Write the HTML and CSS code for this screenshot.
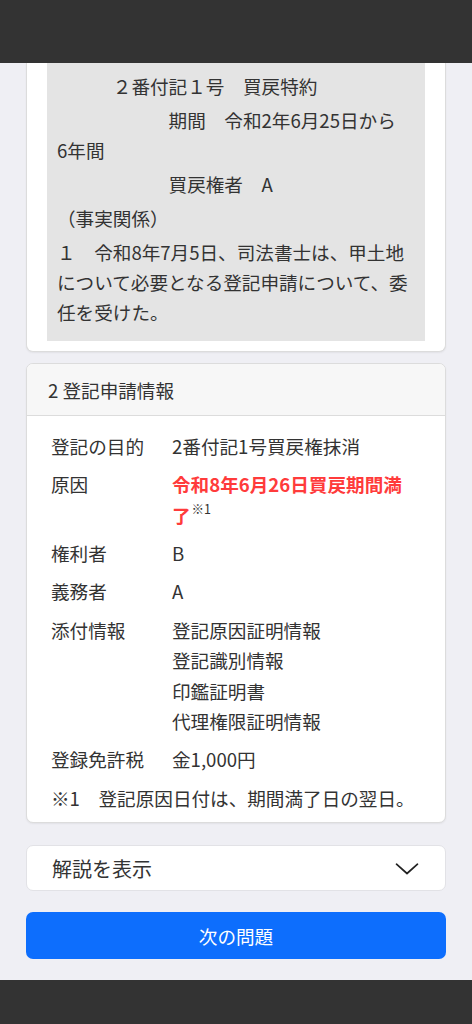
FILE: index.html
```html
<!DOCTYPE html>
<html lang="ja">
<head>
<meta charset="utf-8">
<title>登記申請情報</title>
<link rel="stylesheet" href="styles.css">
</head>
<body>
<div class="topbar"></div>
<main class="content">
  <section class="card card-cut">
    <div class="facts">
      <p>　　　２番付記１号　買戻特約</p>
      <p>　　　　　　期間　令和2年6月25日から<br>6年間</p>
      <p>　　　　　　買戻権者　A</p>
      <p>（事実関係）</p>
      <p>１　令和8年7月5日、司法書士は、甲土地について必要となる登記申請について、委任を受けた。</p>
    </div>
  </section>

  <section class="card info">
    <div class="info-head">2 登記申請情報</div>
    <div class="info-body">
      <div class="row"><div class="label">登記の目的</div><div class="value">2番付記1号買戻権抹消</div></div>
      <div class="row"><div class="label">原因</div><div class="value"><span class="red">令和8年6月26日買戻期間満</span><span class="red">了</span><span class="note-ref">※1</span></div></div>
      <div class="row"><div class="label">権利者</div><div class="value">B</div></div>
      <div class="row"><div class="label">義務者</div><div class="value">A</div></div>
      <div class="row"><div class="label">添付情報</div><div class="value">登記原因証明情報<br>登記識別情報<br>印鑑証明書<br>代理権限証明情報</div></div>
      <div class="row"><div class="label">登録免許税</div><div class="value">金1,000円</div></div>
      <div class="note">※1　登記原因日付は、期間満了日の翌日。</div>
    </div>
  </section>

  <div class="collapse">
    <span>解説を表示</span>
    <svg class="chev" width="24" height="12" viewBox="0 0 24 12"><path d="M1.5 1.2 L12 10.5 L22.5 1.2" fill="none" stroke="#222" stroke-width="1.7" stroke-linecap="round" stroke-linejoin="round"/></svg>
  </div>

  <button class="next">次の問題</button>
</main>
<div class="bottombar"></div>
</body>
</html>
```

FILE: styles.css
```css
* { box-sizing: border-box; }
html, body { margin: 0; padding: 0; }
body {
  width: 472px;
  height: 1024px;
  background: #efeff4;
  font-family: "Noto Sans CJK JP", "Noto Sans", sans-serif;
  color: #333;
  display: flex;
  flex-direction: column;
  overflow: hidden;
}
.topbar { height: 63px; background: #333; flex: none; }
.bottombar { height: 44px; background: #333; flex: none; }
.content {
  flex: 1;
  padding: 0 26px;
  overflow: hidden;
  display: flex;
  flex-direction: column;
}
.card {
  background: #fff;
  border: 1px solid #dcdcdc;
  border-radius: 7px;
  box-shadow: 0 1px 2px rgba(0,0,0,0.06);
}
.card-cut {
  border-top: none;
  border-radius: 0 0 7px 7px;
  padding: 0 20px 10px;
}
.facts {
  background: #e4e4e4;
  padding: 8px 10px 10px;
  font-size: 18.6px;
  line-height: 30px;
  color: #333;
}
.facts p { margin: 0 0 4px; }

.info { margin-top: 11px; overflow: hidden; }
.info-head {
  background: #f7f7f7;
  border-bottom: 1px solid #dcdcdc;
  padding: 11px 21px 10px;
  font-size: 18.6px;
  line-height: 30px;
}
.info-body {
  padding: 15px 40px 9px 24px;
  font-size: 18.6px;
  line-height: 30.5px;
  display: flex;
  flex-direction: column;
  gap: 7.8px;
}
.row { display: grid; grid-template-columns: 121px 1fr; }
.red { color: #ff3b3b; font-weight: 700; }
.note-ref {
  display: inline-block;
  font-size: 12.5px;
  line-height: 13px;
  vertical-align: 9px;
  color: #333;
  margin-left: 1px;
}
.note { white-space: nowrap; }

.collapse {
  margin-top: 22px;
  height: 46px;
  background: #fff;
  border: 1px solid #e2e2e6;
  border-radius: 7px;
  display: flex;
  align-items: center;
  justify-content: space-between;
  padding: 0 26px 0 25px;
  font-size: 20px;
  color: #333;
}
.chev { display: block; margin-top: 1px; }

.next {
  margin-top: 21px;
  height: 47px;
  width: 100%;
  background: #0d6efd;
  border: none;
  border-radius: 7px;
  color: #fff;
  font-family: "Noto Sans CJK JP", "Noto Sans", sans-serif;
  font-size: 18.6px;
  padding: 0;
}
```
